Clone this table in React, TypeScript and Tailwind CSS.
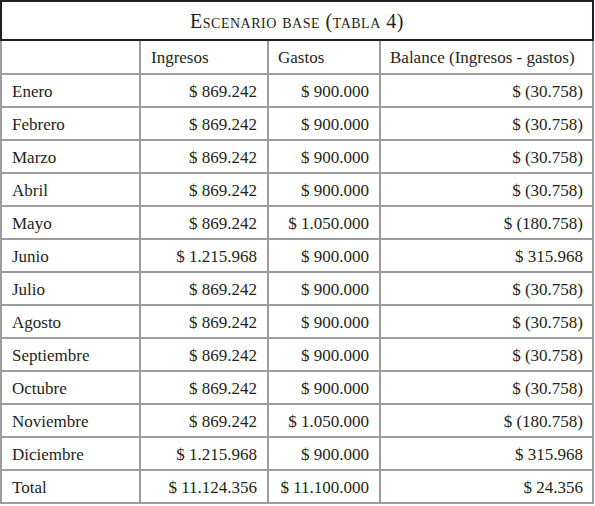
const rows: [string, string, string, string][] = [
  ["Enero", "$ 869.242", "$ 900.000", "$ (30.758)"],
  ["Febrero", "$ 869.242", "$ 900.000", "$ (30.758)"],
  ["Marzo", "$ 869.242", "$ 900.000", "$ (30.758)"],
  ["Abril", "$ 869.242", "$ 900.000", "$ (30.758)"],
  ["Mayo", "$ 869.242", "$ 1.050.000", "$ (180.758)"],
  ["Junio", "$ 1.215.968", "$ 900.000", "$ 315.968"],
  ["Julio", "$ 869.242", "$ 900.000", "$ (30.758)"],
  ["Agosto", "$ 869.242", "$ 900.000", "$ (30.758)"],
  ["Septiembre", "$ 869.242", "$ 900.000", "$ (30.758)"],
  ["Octubre", "$ 869.242", "$ 900.000", "$ (30.758)"],
  ["Noviembre", "$ 869.242", "$ 1.050.000", "$ (180.758)"],
  ["Diciembre", "$ 1.215.968", "$ 900.000", "$ 315.968"],
  ["Total", "$ 11.124.356", "$ 11.100.000", "$ 24.356"],
];

export default function App() {
  return (
    <div className="w-[595px] h-[506px] bg-white text-[#231f20] font-['Liberation_Serif',serif] text-[17px]">
      <div className="w-[594px] h-[41px] border-2 border-[#231f20] flex items-center justify-center">
        <span className="text-[20px] [font-variant:small-caps] tracking-[0.5px] pt-[1px]">Escenario base (tabla 4)</span>
      </div>
      <div className="w-[594px] bg-[#9d9d9d] px-[2px] pb-[2px] grid grid-cols-[137px_126px_110px_211px] gap-[2px]">
        <div className="bg-white h-[32px]" />
        <div className="bg-white h-[32px] flex items-center px-[10px] pt-[2px]">Ingresos</div>
        <div className="bg-white h-[32px] flex items-center px-[9px] pt-[2px]">Gastos</div>
        <div className="bg-white h-[32px] flex items-center px-[9px] pt-[2px]">Balance (Ingresos - gastos)</div>
        {rows.map((r) => (
          <>
            <div key={r[0]} className="bg-white h-[31px] flex items-center px-[10px] pt-[2px]">{r[0]}</div>
            <div className="bg-white h-[31px] flex items-center justify-end px-[10px] pt-[2px]">{r[1]}</div>
            <div className="bg-white h-[31px] flex items-center justify-end px-[10px] pt-[2px]">{r[2]}</div>
            <div className="bg-white h-[31px] flex items-center justify-end px-[9px] pt-[2px]">{r[3]}</div>
          </>
        ))}
      </div>
    </div>
  );
}
